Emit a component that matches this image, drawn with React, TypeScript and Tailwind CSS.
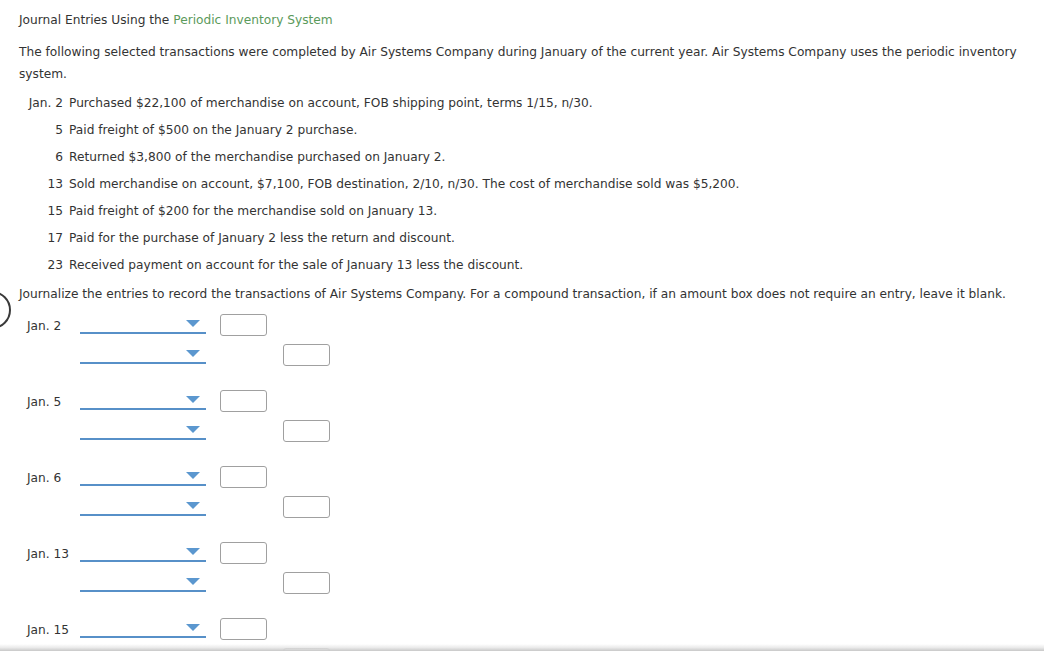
import { useState } from 'react'

const transactions: [string, string][] = [
  ['Jan. 2', 'Purchased $22,100 of merchandise on account, FOB shipping point, terms 1/15, n/30.'],
  ['5', 'Paid freight of $500 on the January 2 purchase.'],
  ['6', 'Returned $3,800 of the merchandise purchased on January 2.'],
  ['13', 'Sold merchandise on account, $7,100, FOB destination, 2/10, n/30. The cost of merchandise sold was $5,200.'],
  ['15', 'Paid freight of $200 for the merchandise sold on January 13.'],
  ['17', 'Paid for the purchase of January 2 less the return and discount.'],
  ['23', 'Received payment on account for the sale of January 13 less the discount.'],
]

const entryDates = ['Jan. 2', 'Jan. 5', 'Jan. 6', 'Jan. 13', 'Jan. 15']

function AccountSelect() {
  return (
    <div className="relative h-[18px] w-[126px] flex-none border-b-2 border-[#5790c8]">
      <span className="absolute right-[6px] top-[4px] h-0 w-0 border-x-[7px] border-t-[7px] border-x-transparent border-t-[#5b97cf]" />
    </div>
  )
}

function AmountBox({ value, onChange }: { value: string; onChange: (v: string) => void }) {
  return (
    <input
      value={value}
      onChange={(e) => onChange(e.target.value)}
      className="h-[22px] w-[47px] rounded-[3px] border border-[#a0a0a0] bg-white px-1 text-[12px] outline-none"
    />
  )
}

export default function App() {
  const [amounts, setAmounts] = useState<Record<string, string>>({})
  const set = (k: string) => (v: string) => setAmounts((p) => ({ ...p, [k]: v }))

  return (
    <div className="relative h-[651px] overflow-hidden bg-white font-['DejaVu_Sans',Verdana,sans-serif] text-[12.2px] text-[#333]">
      {/* partial circle on the left edge */}
      <div className="absolute left-[-27px] top-[291px] h-[38px] w-[38px] rounded-full border-2 border-[#3a3a3a]" />

      <div className="pl-[19px] pr-[19px] pt-[9px]">
        <p className="leading-[22px]">
          Journal Entries Using the <span className="text-[#5b9a5b]">Periodic Inventory System</span>
        </p>

        <p className="mt-[10px] leading-[22px]">
          The following selected transactions were completed by Air Systems Company during January of the current year. Air Systems Company uses the periodic inventory system.
        </p>

        <div className="mt-[4.5px] pl-[8px]">
          {transactions.map(([d, t]) => (
            <div key={d} className="flex h-[27px] items-center">
              <span className="w-[36px] flex-none whitespace-nowrap text-right">{d}</span>
              <span className="ml-[6px] whitespace-nowrap">{t}</span>
            </div>
          ))}
        </div>

        <p className="mt-[4.5px] leading-[22px]">
          Journalize the entries to record the transactions of Air Systems Company. For a compound transaction, if an amount box does not require an entry, leave it blank.
        </p>

        <div className="mt-[4.5px] flex flex-col gap-[16px] pl-[8px]">
          {entryDates.map((d) => (
            <div key={d} className="flex flex-col">
              <div className="flex h-[30px] items-center">
                <span className="w-[53px] flex-none whitespace-nowrap pt-[3px]">{d}</span>
                <AccountSelect />
                <div className="ml-[14px]">
                  <AmountBox value={amounts[d + 'dr'] ?? ''} onChange={set(d + 'dr')} />
                </div>
              </div>
              <div className="flex h-[30px] items-center">
                <span className="w-[53px] flex-none" />
                <AccountSelect />
                <div className="ml-[77px]">
                  <AmountBox value={amounts[d + 'cr'] ?? ''} onChange={set(d + 'cr')} />
                </div>
              </div>
            </div>
          ))}
        </div>
      </div>

      <div className="absolute bottom-0 left-0 right-0 h-[7px] bg-gradient-to-b from-white/0 via-[#e6e6e6]/80 to-[#c8c8c8]" />
    </div>
  )
}
